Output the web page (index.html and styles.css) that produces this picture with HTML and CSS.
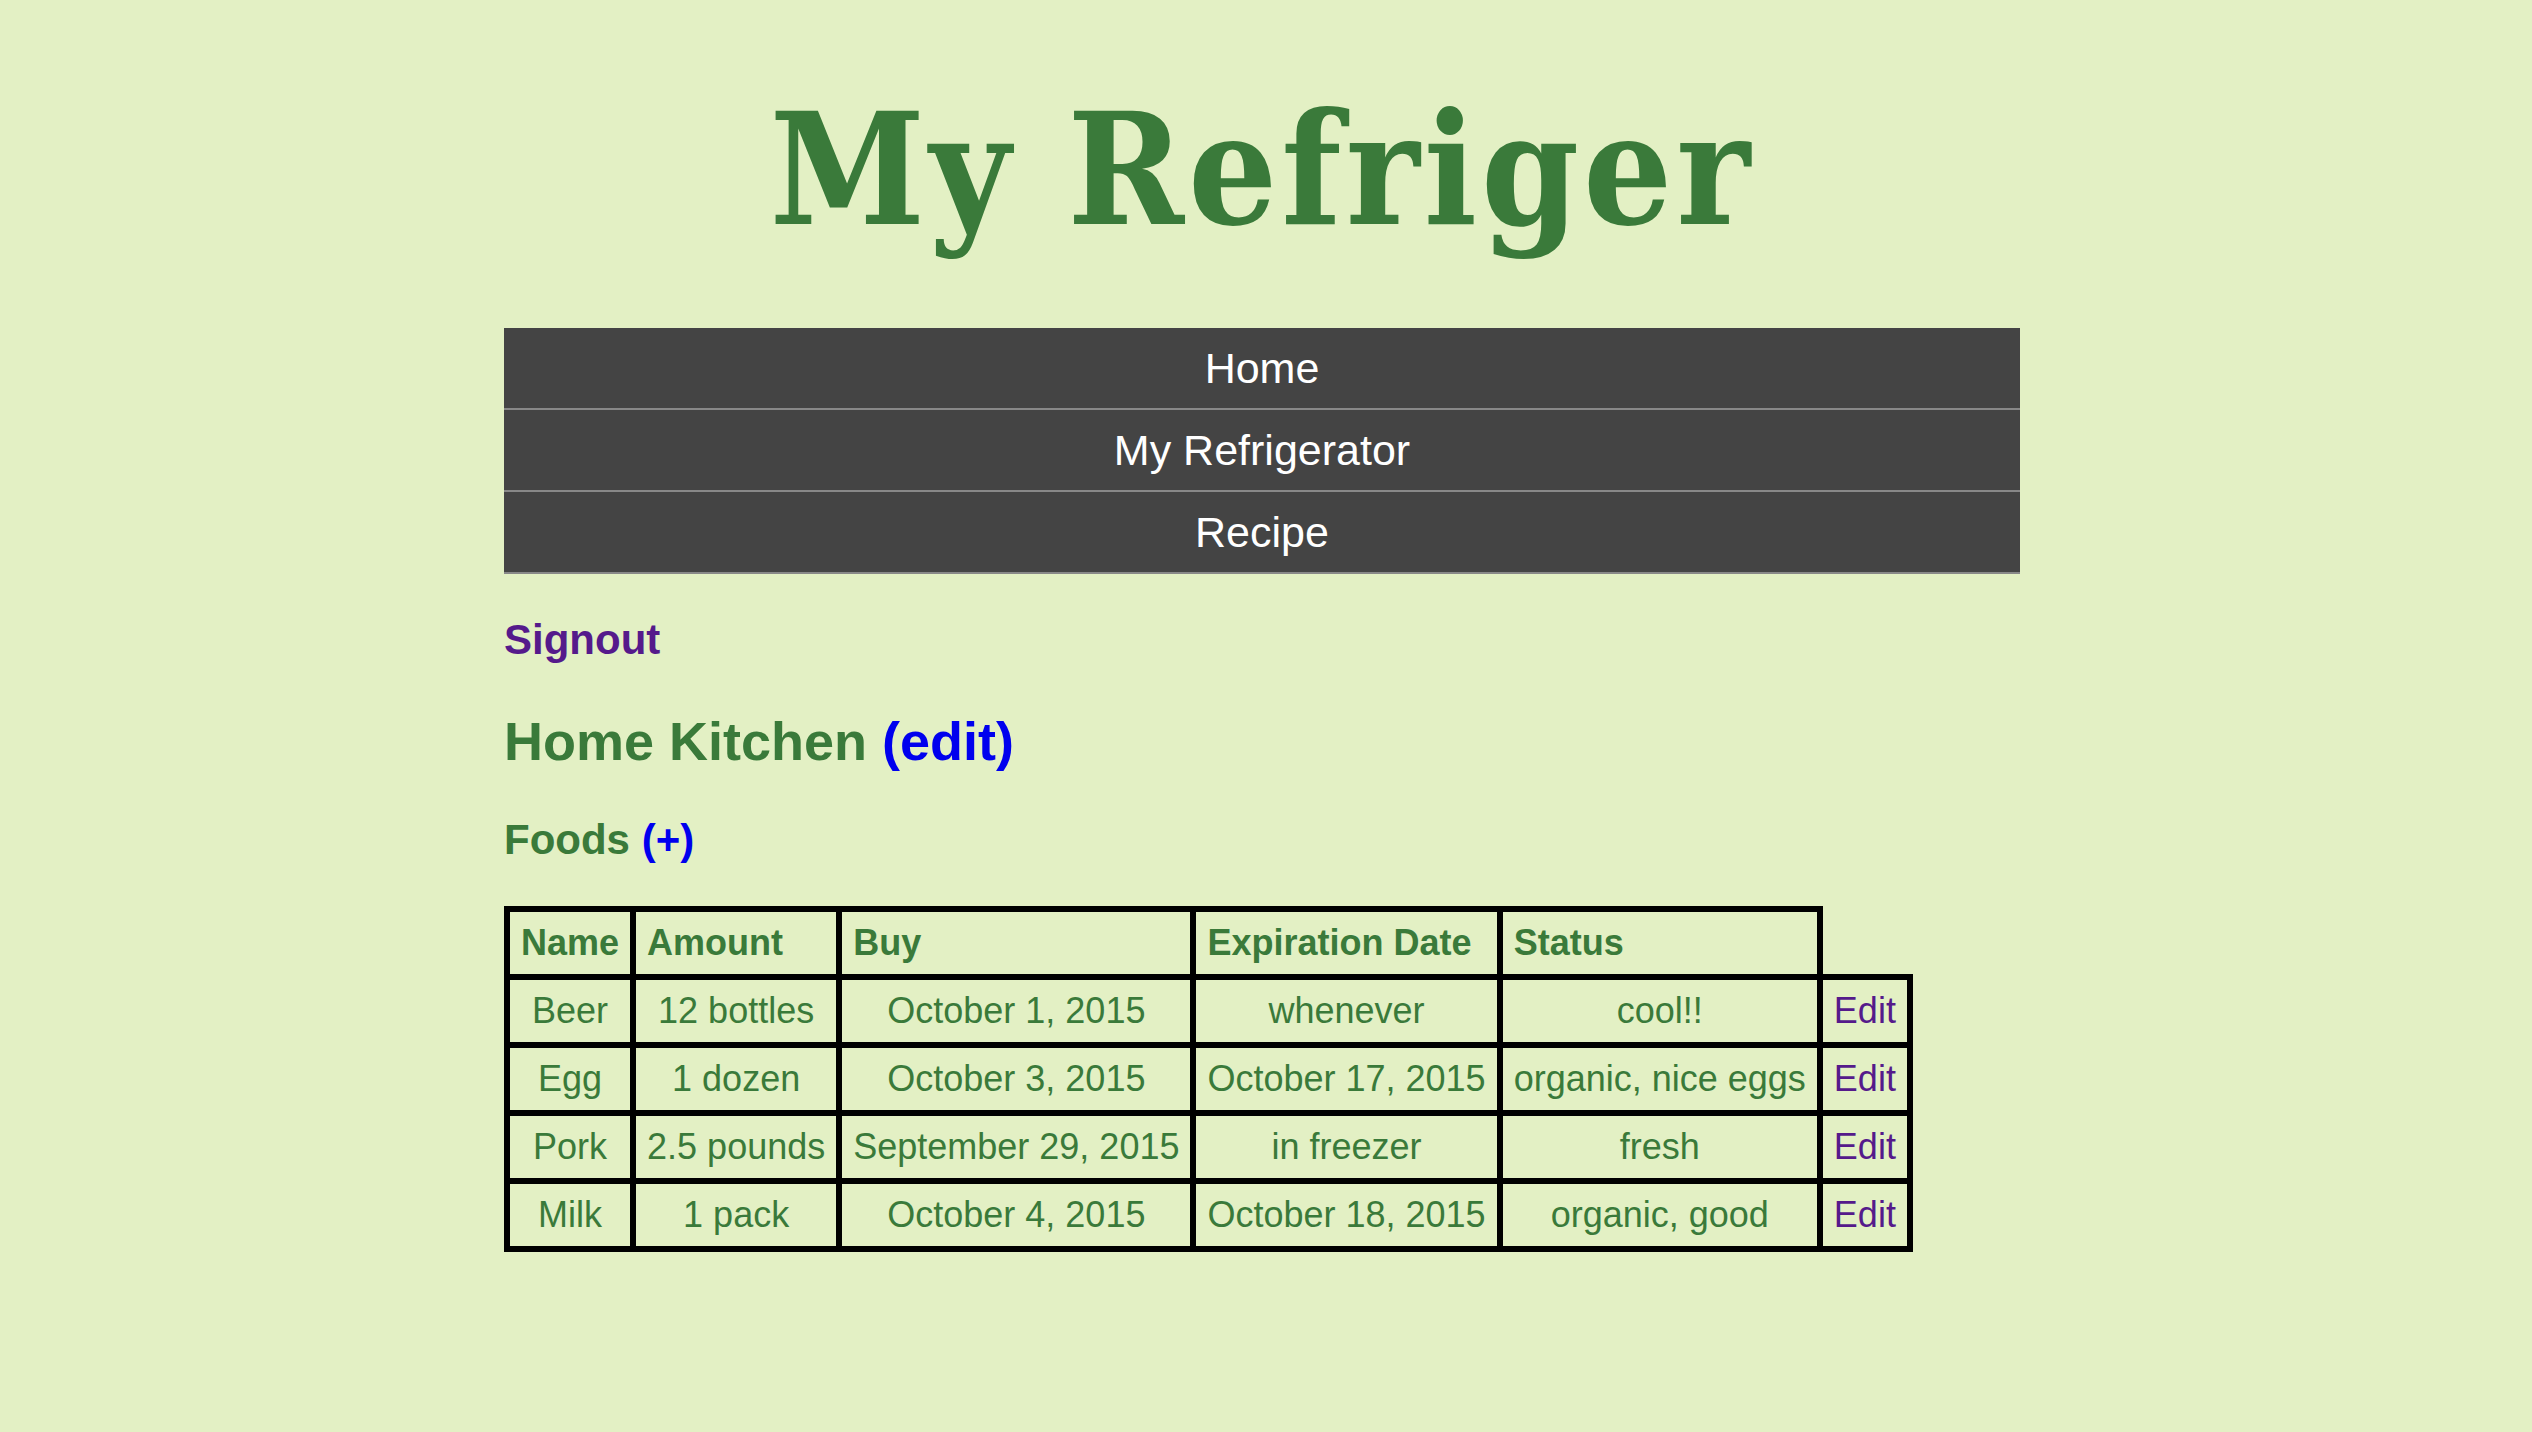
FILE: index.html
```html
<!DOCTYPE html>
<html lang="en">

<head>
    <meta charset="UTF-8">
    <meta name="viewport" content="width=device-width, initial-scale=1.0">
    <title>My Refrigerator</title>
    <link rel="stylesheet" href="styles.css">
</head>

<body>
    <h1 id="title">My Refriger</h1>

    <div id="wrapper">
        <nav id="menu">
            <a href="#">Home</a>
            <a href="#">My Refrigerator</a>
            <a href="#">Recipe</a>
        </nav>

        <h3 id="signout"><a href="#" class="visited">Signout</a></h3>

        <h2 class="kitchen">Home Kitchen <a href="#">(edit)</a></h2>

        <h3 class="foods">Foods <a href="#">(+)</a></h3>

        <table id="foodTable">
            <tr>
                <th>Name</th>
                <th>Amount</th>
                <th>Buy</th>
                <th>Expiration Date</th>
                <th>Status</th>
            </tr>
            <tr>
                <td>Beer</td>
                <td>12 bottles</td>
                <td>October 1, 2015</td>
                <td>whenever</td>
                <td>cool!!</td>
                <td><a href="#" class="visited">Edit</a></td>
            </tr>
            <tr>
                <td>Egg</td>
                <td>1 dozen</td>
                <td>October 3, 2015</td>
                <td>October 17, 2015</td>
                <td>organic, nice eggs</td>
                <td><a href="#" class="visited">Edit</a></td>
            </tr>
            <tr>
                <td>Pork</td>
                <td>2.5 pounds</td>
                <td>September 29, 2015</td>
                <td>in freezer</td>
                <td>fresh</td>
                <td><a href="#" class="visited">Edit</a></td>
            </tr>
            <tr>
                <td>Milk</td>
                <td>1 pack</td>
                <td>October 4, 2015</td>
                <td>October 18, 2015</td>
                <td>organic, good</td>
                <td><a href="#" class="visited">Edit</a></td>
            </tr>
        </table>
    </div>
</body>

</html>
```

FILE: styles.css
```css
body {
    margin: 0;
    padding-right: 8px;
    background: #e3f0c4;
    color: #3a7a3a;
    font-family: "Liberation Sans", Arial, sans-serif;
    font-size: 36px;
}

a {
    color: #0000ee;
    text-decoration: none;
}

a.visited {
    color: #551a8b;
}

#title {
    margin: 92px 0 80px;
    font-family: "DejaVu Serif", serif;
    font-stretch: condensed;
    font-size: 156px;
    letter-spacing: 4px;
    line-height: 1;
    font-weight: bold;
    text-align: center;
    color: #3a7a3a;
}

#wrapper {
    width: 1516px;
    margin: 0 auto;
}

#menu a {
    display: block;
    height: 80px;
    line-height: 80px;
    background: #444;
    border-bottom: 2px solid #888;
    color: #fff;
    font-size: 43px;
    text-align: center;
}

#signout {
    margin: 42px 0 0;
    font-size: 42px;
}

.kitchen {
    margin: 46px 0 0;
    font-size: 54px;
}

.foods {
    margin: 44px 0 0;
    font-size: 42px;
}

#foodTable {
    margin: 42px 0 0;
    border-collapse: collapse;
}

#foodTable th,
#foodTable td {
    border: 6px solid #000;
    padding: 10px 11px;
}

#foodTable th {
    text-align: left;
}

#foodTable td {
    text-align: center;
}
```
